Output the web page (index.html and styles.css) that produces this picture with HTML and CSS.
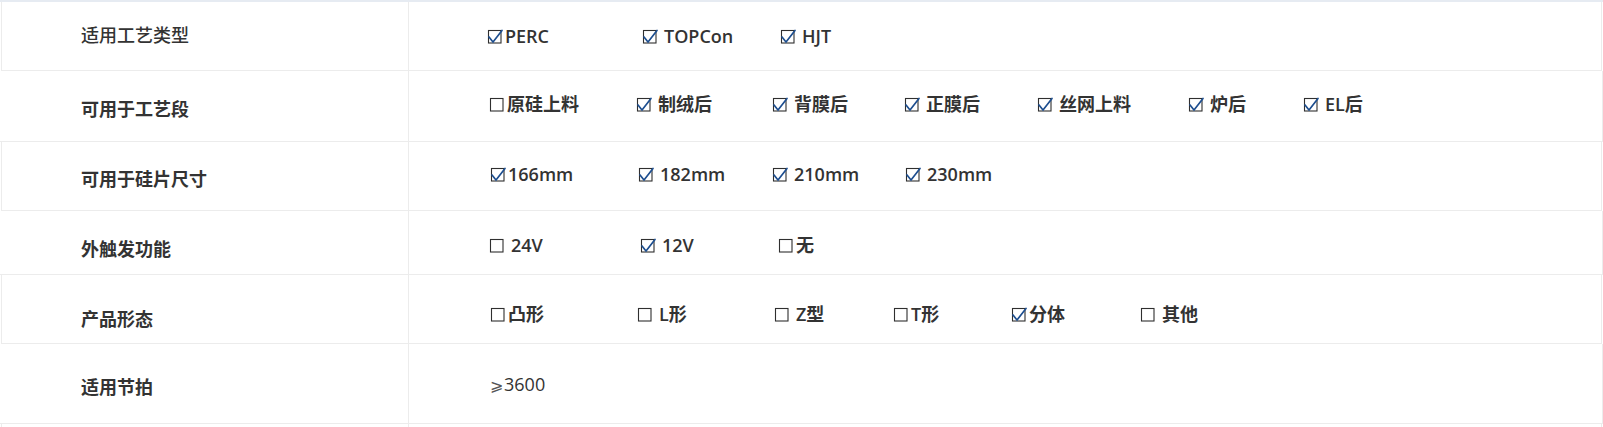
FILE: index.html
```html
<!DOCTYPE html>
<html lang="zh-CN">
<head>
<meta charset="utf-8">
<title>产品参数</title>
<link rel="stylesheet" href="styles.css">
</head>
<body>
<div class="spec">
  <div class="row odd r1">
    <div class="label light">适用工艺类型</div>
    <div class="value">
      <span class="opt"><svg class="cb" viewBox="0 0 15 15"><rect x="0.5" y="1.5" width="12.5" height="12.5"/><polyline points="1,8 5,13 14,1.5"/></svg><span class="t">PERC</span></span>
      <span class="opt"><svg class="cb" viewBox="0 0 15 15"><rect x="0.5" y="1.5" width="12.5" height="12.5"/><polyline points="1,8 5,13 14,1.5"/></svg><span class="t sp">TOPCon</span></span>
      <span class="opt"><svg class="cb" viewBox="0 0 15 15"><rect x="0.5" y="1.5" width="12.5" height="12.5"/><polyline points="1,8 5,13 14,1.5"/></svg><span class="t sp">HJT</span></span>
    </div>
  </div>
  <div class="row even r2">
    <div class="label">可用于工艺段</div>
    <div class="value">
      <span class="opt"><svg class="cb" viewBox="0 0 15 15"><rect x="0.5" y="1.5" width="12.5" height="12.5"/></svg><span class="t">原硅上料</span></span>
      <span class="opt"><svg class="cb" viewBox="0 0 15 15"><rect x="0.5" y="1.5" width="12.5" height="12.5"/><polyline points="1,8 5,13 14,1.5"/></svg><span class="t sp">制绒后</span></span>
      <span class="opt"><svg class="cb" viewBox="0 0 15 15"><rect x="0.5" y="1.5" width="12.5" height="12.5"/><polyline points="1,8 5,13 14,1.5"/></svg><span class="t sp">背膜后</span></span>
      <span class="opt"><svg class="cb" viewBox="0 0 15 15"><rect x="0.5" y="1.5" width="12.5" height="12.5"/><polyline points="1,8 5,13 14,1.5"/></svg><span class="t sp">正膜后</span></span>
      <span class="opt"><svg class="cb" viewBox="0 0 15 15"><rect x="0.5" y="1.5" width="12.5" height="12.5"/><polyline points="1,8 5,13 14,1.5"/></svg><span class="t sp">丝网上料</span></span>
      <span class="opt"><svg class="cb" viewBox="0 0 15 15"><rect x="0.5" y="1.5" width="12.5" height="12.5"/><polyline points="1,8 5,13 14,1.5"/></svg><span class="t sp">炉后</span></span>
      <span class="opt"><svg class="cb" viewBox="0 0 15 15"><rect x="0.5" y="1.5" width="12.5" height="12.5"/><polyline points="1,8 5,13 14,1.5"/></svg><span class="t sp">EL后</span></span>
    </div>
  </div>
  <div class="row odd r3">
    <div class="label">可用于硅片尺寸</div>
    <div class="value">
      <span class="opt"><svg class="cb" viewBox="0 0 15 15"><rect x="0.5" y="1.5" width="12.5" height="12.5"/><polyline points="1,8 5,13 14,1.5"/></svg><span class="t">166mm</span></span>
      <span class="opt"><svg class="cb" viewBox="0 0 15 15"><rect x="0.5" y="1.5" width="12.5" height="12.5"/><polyline points="1,8 5,13 14,1.5"/></svg><span class="t sp">182mm</span></span>
      <span class="opt"><svg class="cb" viewBox="0 0 15 15"><rect x="0.5" y="1.5" width="12.5" height="12.5"/><polyline points="1,8 5,13 14,1.5"/></svg><span class="t sp">210mm</span></span>
      <span class="opt"><svg class="cb" viewBox="0 0 15 15"><rect x="0.5" y="1.5" width="12.5" height="12.5"/><polyline points="1,8 5,13 14,1.5"/></svg><span class="t sp">230mm</span></span>
    </div>
  </div>
  <div class="row even r4">
    <div class="label">外触发功能</div>
    <div class="value">
      <span class="opt"><svg class="cb" viewBox="0 0 15 15"><rect x="0.5" y="1.5" width="12.5" height="12.5"/></svg><span class="t sp">24V</span></span>
      <span class="opt"><svg class="cb" viewBox="0 0 15 15"><rect x="0.5" y="1.5" width="12.5" height="12.5"/><polyline points="1,8 5,13 14,1.5"/></svg><span class="t sp">12V</span></span>
      <span class="opt"><svg class="cb" viewBox="0 0 15 15"><rect x="0.5" y="1.5" width="12.5" height="12.5"/></svg><span class="t">无</span></span>
    </div>
  </div>
  <div class="row odd r5">
    <div class="label">产品形态</div>
    <div class="value">
      <span class="opt"><svg class="cb" viewBox="0 0 15 15"><rect x="0.5" y="1.5" width="12.5" height="12.5"/></svg><span class="t">凸形</span></span>
      <span class="opt"><svg class="cb" viewBox="0 0 15 15"><rect x="0.5" y="1.5" width="12.5" height="12.5"/></svg><span class="t sp">L形</span></span>
      <span class="opt"><svg class="cb" viewBox="0 0 15 15"><rect x="0.5" y="1.5" width="12.5" height="12.5"/></svg><span class="t sp">Z型</span></span>
      <span class="opt"><svg class="cb" viewBox="0 0 15 15"><rect x="0.5" y="1.5" width="12.5" height="12.5"/></svg><span class="t">T形</span></span>
      <span class="opt"><svg class="cb" viewBox="0 0 15 15"><rect x="0.5" y="1.5" width="12.5" height="12.5"/><polyline points="1,8 5,13 14,1.5"/></svg><span class="t">分体</span></span>
      <span class="opt"><svg class="cb" viewBox="0 0 15 15"><rect x="0.5" y="1.5" width="12.5" height="12.5"/></svg><span class="t sp">其他</span></span>
    </div>
  </div>
  <div class="row even r6">
    <div class="label">适用节拍</div>
    <div class="value"><span class="plain"><span class="ge">⩾</span>3600</span></div>
  </div>
  <div class="row odd r7">
    <div class="label"></div>
    <div class="value"></div>
  </div>
</div>
</body>
</html>
```

FILE: styles.css
```css
html, body {
  margin: 0;
  padding: 0;
  background: #ffffff;
}

body {
  font-family: "Open Sans", "Noto Sans CJK SC", sans-serif;
  color: #333333;
  overflow: hidden;
}

.spec {
  border-top: 2px solid #e6ebf2;
}

.row {
  display: grid;
  grid-template-columns: 409px 1fr;
  box-sizing: border-box;
  border-bottom: 1px solid #ececec;
}

.row.odd {
  margin: 0 1px;
  border-left: 1px solid #ececec;
  border-right: 1px solid #ececec;
  grid-template-columns: 407px 1fr;
}

.row.even {
  border-right: 1px solid #ececec;
}

.label {
  box-sizing: border-box;
  border-right: 1px solid #ececec;
  padding-left: 81px;
  font-size: 18px;
  line-height: 24px;
  font-weight: 700;
  white-space: nowrap;
}

.row.odd .label {
  padding-left: 79px;
}

.label.light {
  font-weight: 500;
}

.value {
  display: flex;
  align-items: flex-start;
  font-size: 18px;
  line-height: 24px;
  font-weight: 600;
  white-space: nowrap;
}

.opt {
  display: inline-flex;
  align-items: center;
  flex: none;
}

.cb {
  width: 15px;
  height: 15px;
  flex: none;
  overflow: visible;
}

.cb rect {
  fill: none;
  stroke: #2f2f2f;
  stroke-width: 1.1;
}

.cb polyline {
  fill: none;
  stroke: #1d4e8f;
  stroke-width: 1.7;
  stroke-linejoin: round;
  stroke-linecap: round;
}

.t {
  margin-left: 2px;
}

.t.sp {
  margin-left: 6px;
}

.plain {
  font-weight: 500;
}

.ge {
  font-family: "DejaVu Sans", sans-serif;
  font-weight: 300;
  font-size: 16px;
  color: #555555;
  margin-right: 1px;
}

/* row heights (incl. bottom rule) */
.r1 { height: 69px; }
.r2 { height: 71px; }
.r3 { height: 69px; }
.r4 { height: 64px; }
.r5 { height: 69px; }
.r6 { height: 80px; }
.r7 { height: 69px; }

/* vertical placement */
.r1 .label { padding-top: 21px; }
.r2 .label { padding-top: 26px; }
.r3 .label { padding-top: 25px; }
.r4 .label { padding-top: 26px; }
.r5 .label { padding-top: 32px; }
.r6 .label { padding-top: 31px; }

.r1 .value { padding-top: 22px; padding-left: 79px; }
.r2 .value { padding-top: 21px; padding-left: 81px; }
.r3 .value { padding-top: 20px; padding-left: 82px; }
.r4 .value { padding-top: 22px; padding-left: 81px; }
.r5 .value { padding-top: 27px; padding-left: 82px; }
.r6 .value { padding-top: 28px; padding-left: 81px; }

/* option column widths */
.r1 .opt:nth-child(1) { width: 155px; }
.r1 .opt:nth-child(2) { width: 138px; }

.r2 .opt:nth-child(1) { width: 147px; }
.r2 .opt:nth-child(2) { width: 136px; }
.r2 .opt:nth-child(3) { width: 132px; }
.r2 .opt:nth-child(4) { width: 133px; }
.r2 .opt:nth-child(5) { width: 151px; }
.r2 .opt:nth-child(6) { width: 115px; }

.r3 .opt:nth-child(1) { width: 148px; }
.r3 .opt:nth-child(2) { width: 134px; }
.r3 .opt:nth-child(3) { width: 133px; }

.r4 .opt:nth-child(1) { width: 151px; }
.r4 .opt:nth-child(2) { width: 138px; }

.r5 .opt:nth-child(1) { width: 147px; }
.r5 .opt:nth-child(2) { width: 137px; }
.r5 .opt:nth-child(3) { width: 119px; }
.r5 .opt:nth-child(4) { width: 118px; }
.r5 .opt:nth-child(5) { width: 129px; }
```
